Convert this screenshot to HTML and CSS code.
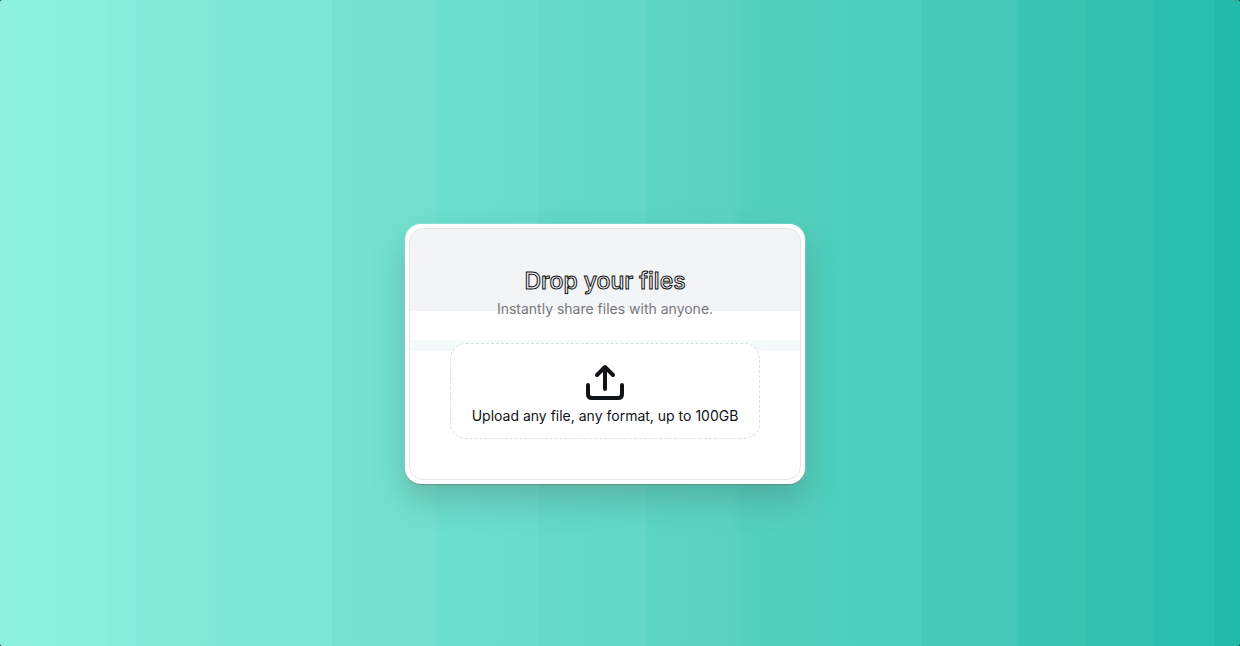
FILE: index.html
```html
<!DOCTYPE html>
<html lang="en">
<head>
  <meta charset="utf-8">
  <meta name="viewport" content="width=device-width, initial-scale=1">
  <title>Drop your files</title>
  <link rel="stylesheet" href="styles.css">
</head>
<body>
  <main class="stage">
    <section class="card">
      <div class="panel">
        <header class="intro">
          <h1 class="title">Drop your files</h1>
          <p class="subtitle">Instantly share files with anyone.</p>
        </header>
        <button class="dropzone" type="button">
          <svg class="upload-icon" viewBox="0 0 40 36" fill="none" stroke="currentColor" stroke-width="4" stroke-linecap="round" stroke-linejoin="round" aria-hidden="true">
            <path d="M20 25V3M12 11l8-8 8 8"/>
            <path d="M3 21v9q0 4 4 4h26q4 0 4-4v-9"/>
          </svg>
          <span>Upload any file, any format, up to 100GB</span>
        </button>
      </div>
    </section>
  </main>
</body>
</html>
```
FILE: styles.css
```css
* {
  box-sizing: border-box;
}

body {
  margin: 0;
  font-family: Inter, "Liberation Sans", sans-serif;
  background: #111;
}

.stage {
  min-height: 100vh;
  display: grid;
  place-items: center;
  padding: 62px 30px 0 0;
  border-radius: 2px;
  background: linear-gradient(90deg,
    #8ff1e1 0, #8bf0dd 1%, #8aeedc 8.7%,
    #87ebda 8.7%, #85ebd9 13.2%, #82e9d7 17%,
    #7ee7d6 18%, #7ce5d4 26.8%, #75e2cf 26.8%, #72e0cd 35.2%,
    #6cdfcd 35.2%, #69dccb 43.5%, #64d9c7 43.5%, #62d8c5 52.2%,
    #5cd6c2 52.2%, #5ad4c0 59%, #54d0be 60%, #52cfbc 65.5%,
    #4dcebe 67%, #4ccdbd 74.3%, #46c9b9 74.3%, #44c8b8 82.1%,
    #3bc4b3 82.1%, #3bc3b2 87.6%, #33c1b0 87.6%, #33c0af 93%,
    #2bc0ae 93%, #29bead 98%, #22bbaa 98%);
}

.card {
  width: 100%;
  max-width: 400px;
  padding: 4px;
  border-radius: 16px;
  background: #fff;
  box-shadow: 0 1px 1px rgba(90, 75, 75, 0.5), 0 0 2px rgba(200, 255, 248, 0.8), 0 16px 32px rgba(60, 85, 80, 0.28);
}

.panel {
  padding: 40px;
  border: 1px solid #e5e6e8;
  border-radius: 14px;
  background:
    linear-gradient(#f4fcfb, #f4fcfb) 0 111px / 100% 11px no-repeat,
    linear-gradient(#f3f4f6, #f3f4f6) 0 0 / 100% 82px no-repeat,
    #fff;
}

.intro {
  margin-bottom: 24px;
  text-align: center;
}

.title {
  margin: 0;
  font-size: 23px;
  font-weight: 500;
  line-height: 24px;
  color: #f3f4f6;
  -webkit-text-stroke: 1px #111;
}

.subtitle {
  margin: 6px 0 0;
  font-size: 14px;
  line-height: 20px;
  color: #77787b;
}

.dropzone {
  width: 100%;
  display: flex;
  flex-direction: column;
  align-items: center;
  gap: 6px;
  padding: 20px 16px 12px;
  border: 1px dashed #dcdfe1;
  border-radius: 16px;
  background: #fff;
  font: 400 14px/20px Inter, "Liberation Sans", sans-serif;
  color: #101417;
  white-space: nowrap;
}

.upload-icon {
  width: 40px;
  height: 36px;
}
```
